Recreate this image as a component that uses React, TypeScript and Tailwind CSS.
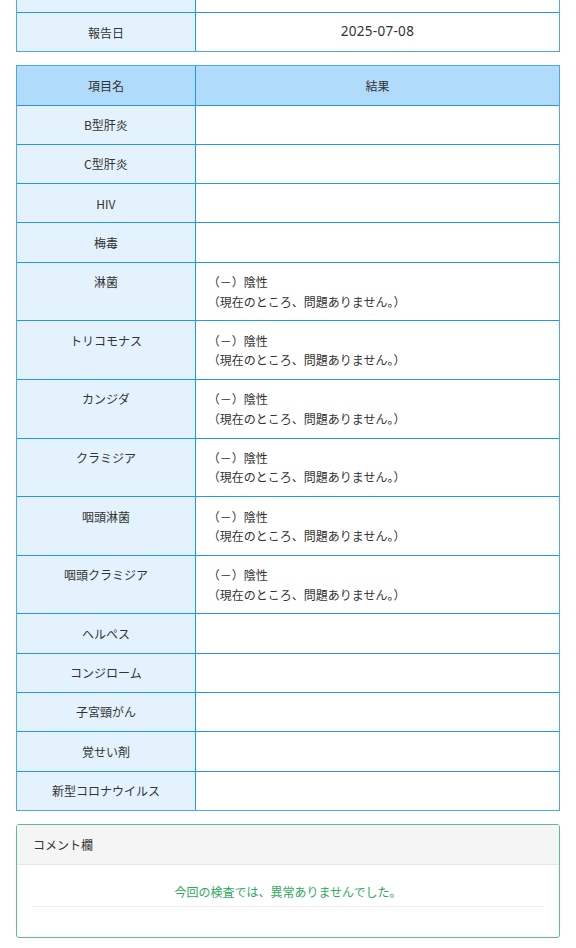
import React from "react";

const rows: { name: string; result?: boolean }[] = [
  { name: "B型肝炎" },
  { name: "C型肝炎" },
  { name: "HIV" },
  { name: "梅毒" },
  { name: "淋菌", result: true },
  { name: "トリコモナス", result: true },
  { name: "カンジダ", result: true },
  { name: "クラミジア", result: true },
  { name: "咽頭淋菌", result: true },
  { name: "咽頭クラミジア", result: true },
  { name: "ヘルペス" },
  { name: "コンジローム" },
  { name: "子宮頸がん" },
  { name: "覚せい剤" },
  { name: "新型コロナウイルス" },
];

const font = { fontFamily: '"Noto Sans CJK JP", "Noto Sans", sans-serif' };

export default function App() {
  return (
    <div className="bg-white min-h-[948px] px-4 text-[12px] leading-[19.3px] text-[#333]" style={font}>
      {/* first table (scrolled) */}
      <div className="border-x border-b border-[#4aa8f0]">
        <div className="grid grid-cols-[33%_1fr] h-[12px]">
          <div className="bg-[#e3f2fd] border-r border-[#2196f3]" />
          <div className="bg-white" />
        </div>
        <div className="grid grid-cols-[33%_1fr] border-t border-[#2196f3]">
          <div className="bg-[#e3f2fd] border-r border-[#2196f3] py-[9.5px] text-center">報告日</div>
          <div className="bg-white flex items-center justify-center">
            <span
              className="text-[13.5px] leading-none tracking-[0.3px]"
              style={{ fontFamily: '"Noto Sans", sans-serif' }}
            >
              2025-07-08
            </span>
          </div>
        </div>
      </div>

      {/* results table */}
      <div className="mt-[13px] border border-[#4aa8f0]">
        <div className="grid grid-cols-[33%_1fr] bg-[#b1dbfb]">
          <div className="border-r border-[#2196f3] py-[9.5px] text-center">項目名</div>
          <div className="py-[9.5px] text-center">結果</div>
        </div>
        {rows.map((r) => (
          <div key={r.name} className="grid grid-cols-[33%_1fr] border-t border-[#2196f3]">
            <div className="bg-[#e3f2fd] border-r border-[#2196f3] py-[9.5px] text-center">{r.name}</div>
            <div className="bg-white py-[9.5px] pl-[12px] pr-4">
              {r.result ? (
                <>
                  <div>（－）陰性</div>
                  <div>（現在のところ、問題ありません。）</div>
                </>
              ) : (
                <div>&nbsp;</div>
              )}
            </div>
          </div>
        ))}
      </div>

      {/* comment box */}
      <div className="mt-[13px] border border-[#5cc08c] rounded-[3px] overflow-hidden">
        <div className="bg-[#f5f5f5] border-b border-[#e6e6e6] h-[40px] flex items-center px-4 text-[#333]">
          コメント欄
        </div>
        <div className="px-4 pt-[17px] pb-[30px]">
          <div className="text-center text-[#2eaa5c] pb-[5px] border-b border-[#eeeeee]">
            今回の検査では、異常ありませんでした。
          </div>
        </div>
      </div>
    </div>
  );
}
